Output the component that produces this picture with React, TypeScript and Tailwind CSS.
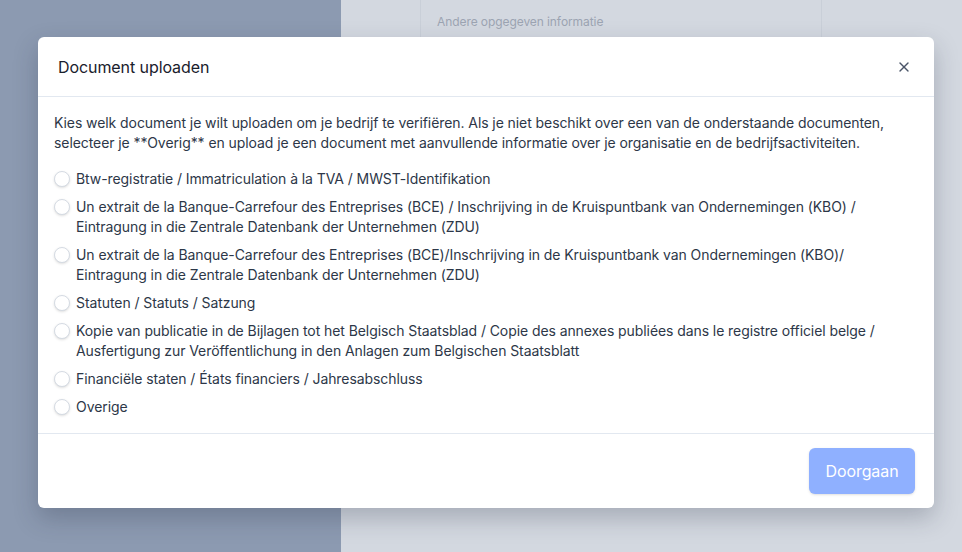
import { X } from 'lucide-react';

const options = [
  'Btw-registratie / Immatriculation à la TVA / MWST-Identifikation',
  'Un extrait de la Banque-Carrefour des Entreprises (BCE) / Inschrijving in de Kruispuntbank van Ondernemingen (KBO) / Eintragung in die Zentrale Datenbank der Unternehmen (ZDU)',
  'Un extrait de la Banque-Carrefour des Entreprises (BCE)/Inschrijving in de Kruispuntbank van Ondernemingen (KBO)/ Eintragung in die Zentrale Datenbank der Unternehmen (ZDU)',
  'Statuten / Statuts / Satzung',
  'Kopie van publicatie in de Bijlagen tot het Belgisch Staatsblad / Copie des annexes publiées dans le registre officiel belge / Ausfertigung zur Veröffentlichung in den Anlagen zum Belgischen Staatsblatt',
  'Financiële staten / États financiers / Jahresabschluss',
  'Overige',
];

function Radio({ label }: { label: string }) {
  return (
    <label className="flex items-start text-sm leading-5 text-[#2d3748]">
      <span className="mt-0.5 mr-1.5 h-4 w-4 shrink-0 rounded-full border border-[#d5dbe3] bg-white shadow-sm" />
      <span>{label}</span>
    </label>
  );
}

export default function App() {
  return (
    <div className="relative flex h-[552px] w-full overflow-hidden font-['Inter',sans-serif] tracking-[-0.005em]">
      {/* page behind the backdrop */}
      <div className="w-[341px] shrink-0 bg-[#8c9ab1]" />
      <div className="flex flex-1 items-start bg-[#d3d8e0] pl-[79px]">
        <div className="h-[440px] w-[402px] border-x border-[#c9cfd8] px-4 pt-[14px] text-xs text-[#9ca4b2]">
          Andere opgegeven informatie
        </div>
      </div>

      {/* modal */}
      <div className="absolute left-[38px] top-[37px] w-[896px] rounded-md bg-white shadow-[0_10px_25px_rgba(30,41,59,0.25)]">
        <div className="flex h-[60px] items-center justify-between border-b border-[#e2e8f0] px-5">
          <h2 className="text-base text-[#1a202c]">Document uploaden</h2>
          <button className="flex h-5 w-5 items-center justify-center text-[#4a5568]">
            <X size={16} strokeWidth={2} />
          </button>
        </div>
        <div className="px-4 pt-4 pb-4">
          <p className="mb-4 text-sm leading-5 text-[#2d3748]">
            Kies welk document je wilt uploaden om je bedrijf te verifiëren. Als je niet beschikt over een van de onderstaande documenten, selecteer je **Overig** en upload je een document met aanvullende informatie over je organisatie en de bedrijfsactiviteiten.
          </p>
          <div className="flex flex-col gap-2">
            {options.map((o) => (
              <Radio key={o} label={o} />
            ))}
          </div>
        </div>
        <div className="flex justify-end border-t border-[#e2e8f0] px-[19px] py-[14px]">
          <button className="h-[46px] w-[106px] rounded-md bg-[#8fb0ff] text-base text-white shadow-sm">
            Doorgaan
          </button>
        </div>
      </div>
    </div>
  );
}
